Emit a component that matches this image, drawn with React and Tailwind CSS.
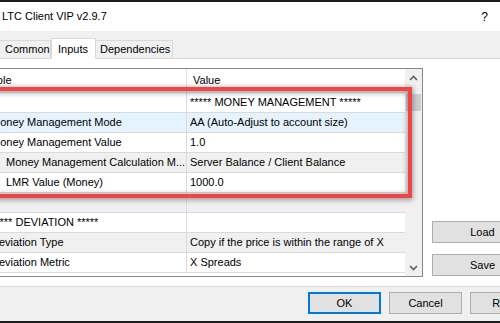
import React from 'react';

const rows = [
  { name: '', value: '***** MONEY MANAGEMENT *****' },
  { name: 'Money Management Mode', value: 'AA (Auto-Adjust to account size)', selected: true },
  { name: 'Money Management Value', value: '1.0' },
  { name: 'Money Management Calculation M...', value: 'Server Balance / Client Balance', indent: true },
  { name: 'LMR Value (Money)', value: '1000.0', indent: true },
  { name: '', value: '' },
  { name: '***** DEVIATION *****', value: '' },
  { name: 'Deviation Type', value: 'Copy if the price is within the range of X' },
  { name: 'Deviation Metric', value: 'X Spreads' },
];

const Chevron = ({ up }) => (
  <svg width="9" height="6" viewBox="0 0 9 6">
    <polyline
      points={up ? '1,5 4.5,1.5 8,5' : '1,1 4.5,4.5 8,1'}
      fill="none"
      stroke="#606060"
      strokeWidth="1.6"
    />
  </svg>
);

const Button = ({ children, primary, className = '' }) => (
  <div
    className={`h-[22px] flex items-center justify-center bg-[#e1e1e1] shrink-0 ${
      primary ? 'border-2 border-[#0078d7]' : 'border border-[#adadad]'
    } ${className}`}
  >
    {children}
  </div>
);

const ParamTable = () => (
  <div className="-ml-[40px] w-[463px] h-[209px] mt-[9px] border border-[#828790] flex shrink-0 bg-white">
    <div className="flex-1 flex flex-col">
      {/* header */}
      <div className="h-[24px] flex border-b border-[#e5e5e5] shrink-0">
        <div className="w-[226px] border-r border-[#e5e5e5] pl-[11px] flex items-center">Variable</div>
        <div className="flex-1 pl-[6px] flex items-center">Value</div>
      </div>
      {rows.map((r, i) => (
        <div
          key={i}
          className={`h-[20px] flex border-b border-[#dadada] shrink-0 ${
            r.selected ? 'bg-[#e5f3ff]' : i % 2 === 1 ? 'bg-[#f0f0f0]' : 'bg-white'
          }`}
        >
          <div
            className={`w-[226px] border-r border-[#dadada] flex items-center whitespace-nowrap ${
              r.indent ? 'pl-[45px]' : 'pl-[30px]'
            }`}
          >
            {r.name}
          </div>
          <div className="flex-1 pl-[3px] flex items-center whitespace-nowrap">{r.value}</div>
        </div>
      ))}
    </div>
    {/* scrollbar */}
    <div className="w-[17px] bg-[#f0f0f0] flex flex-col items-center">
      <div className="h-[17px] flex items-center justify-center">
        <Chevron up />
      </div>
      <div className="w-[15px] h-[17px] mt-[8px] bg-[#cdcdcd]" />
      <div className="flex-1" />
      <div className="h-[17px] flex items-center justify-center">
        <Chevron />
      </div>
    </div>
  </div>
);

export default function App() {
  return (
    <div
      className="relative w-[500px] h-[323px] overflow-hidden bg-[#f0f0f0] flex flex-col text-[11px] text-black"
      style={{ fontFamily: '"Liberation Sans", Arial, sans-serif' }}
    >
      <div className="h-[2px] bg-[#1c1c1c] shrink-0" />

      {/* title bar */}
      <div className="h-[29px] bg-white flex items-center justify-between shrink-0">
        <span className="pl-[2px]">LTC Client VIP v2.9.7</span>
        <span className="pr-[12px] text-[12px]">?</span>
      </div>

      {/* tabs */}
      <div className="h-[27px] flex items-end shrink-0">
        <div className="-ml-px w-[52px] h-[18px] border border-b-0 border-[#d9d9d9] pl-[5px] flex items-center">
          Common
        </div>
        <div className="relative z-10 -mb-px w-[45px] h-[21px] bg-white border border-b-0 border-[#d9d9d9] pl-[6px] flex items-center">
          Inputs
        </div>
        <div className="w-[77px] h-[18px] border border-b-0 border-l-0 border-[#d9d9d9] pl-[4px] flex items-center">
          Dependencies
        </div>
      </div>

      {/* tab page */}
      <div className="h-[229px] bg-white border-y border-[#d9d9d9] flex items-start shrink-0">
        <ParamTable />
        <div className="ml-[9px] mt-[162px] flex flex-col gap-[11px]">
          <Button className="w-[101px] h-[22px]">Load</Button>
          <Button className="w-[101px] h-[21px]">Save</Button>
        </div>
      </div>

      {/* bottom buttons */}
      <div className="flex-1 flex items-start pt-[5px] pl-[308px] gap-[8px]">
        <Button primary className="w-[73px]">OK</Button>
        <Button className="w-[73px]">Cancel</Button>
        <Button className="w-[73px]">Reset</Button>
      </div>

      <div className="h-[2px] bg-[#1c1c1c] shrink-0" />

      {/* red highlight overlay */}
      <div className="absolute left-[-10px] top-[87px] w-[422px] h-[111px] border-4 border-[#f24444] shadow-[0_1px_5px_1px_rgba(0,0,0,0.35),inset_0_1px_5px_1px_rgba(0,0,0,0.35)]" />
    </div>
  );
}
